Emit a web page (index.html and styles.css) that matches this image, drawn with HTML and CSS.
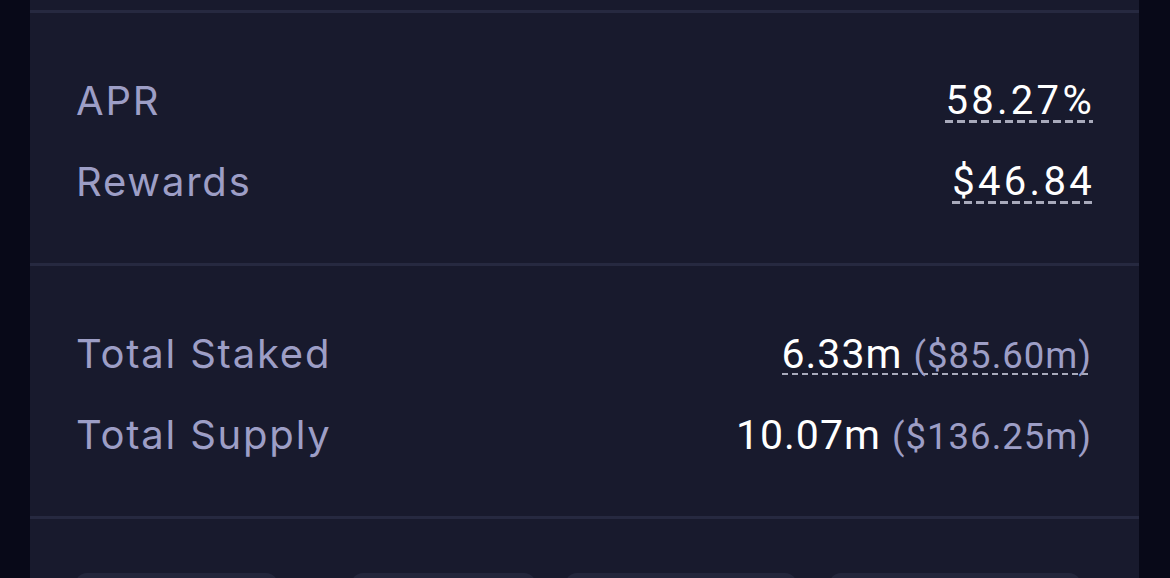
FILE: index.html
```html
<!DOCTYPE html>
<html>
<head>
<meta charset="utf-8">
<link rel="stylesheet" href="styles.css">
</head>
<body>
<div class="panel">
  <div class="top-space"></div>
  <section class="section">
    <div class="row">
      <span class="label">APR</span>
      <span class="value wide tip">58.27%</span>
    </div>
    <div class="row">
      <span class="label">Rewards</span>
      <span class="value wide tip">$46.84</span>
    </div>
  </section>
  <section class="section">
    <div class="row">
      <span class="label">Total Staked</span>
      <span class="value tip-thin">6.33m <span class="sub">($85.60m)</span></span>
    </div>
    <div class="row">
      <span class="label">Total Supply</span>
      <span class="value">10.07m <span class="sub">($136.25m)</span></span>
    </div>
  </section>
  <section class="buttons">
    <div class="btn b1"></div>
    <div class="btn b2"></div>
    <div class="btn b3"></div>
    <div class="btn b4"></div>
  </section>
</div>
</body>
</html>
```

FILE: styles.css
```css
html, body {
  margin: 0;
  padding: 0;
  height: 100%;
  background: #080918;
  overflow: hidden;
}

body {
  display: flex;
  justify-content: flex-start;
}

.panel {
  margin-left: 30px;
  width: 1109px;
  height: 578px;
  overflow: hidden;
  background: #181a2d;
  display: flex;
  flex-direction: column;
}

.panel > * {
  flex-shrink: 0;
}

.top-space {
  height: 10px;
  border-bottom: 3px solid #262940;
}

.section {
  padding: 47px 47px 41px 46px;
  border-bottom: 3px solid #262940;
}

.row {
  height: 81px;
  display: flex;
  align-items: center;
  justify-content: space-between;
}

.label {
  font-family: Inter, "Noto Sans", sans-serif;
  font-size: 40px;
  color: #9d9ec6;
  letter-spacing: 1.8px;
}

.value {
  font-family: Roboto, "Liberation Sans", sans-serif;
  font-size: 41px;
  color: #ffffff;
  letter-spacing: 1px;
}

.value.wide {
  font-size: 40px;
  letter-spacing: 3.3px;
  margin-right: -3px;
}

.sub {
  font-size: 36.5px;
  color: #9d9ec6;
}

.tip {
  background: repeating-linear-gradient(to right, #a8aabb 0 8px, transparent 8px 12px) left bottom 1px / calc(100% - 2px) 3px no-repeat;
}

.tip-thin {
  background: repeating-linear-gradient(to right, #a8aabb 0 6px, transparent 6px 10px) left bottom 3px / 100% 2px no-repeat;
}

.buttons {
  display: flex;
  padding: 54px 0 0 45px;
}

.btn {
  height: 60px;
  background: #23263b;
  border-radius: 12px;
}

.b1 { width: 203px; }
.b2 { width: 185px; margin-left: 73px; }
.b3 { width: 232px; margin-left: 29px; }
.b4 { width: 252px; margin-left: 32px; }
```
